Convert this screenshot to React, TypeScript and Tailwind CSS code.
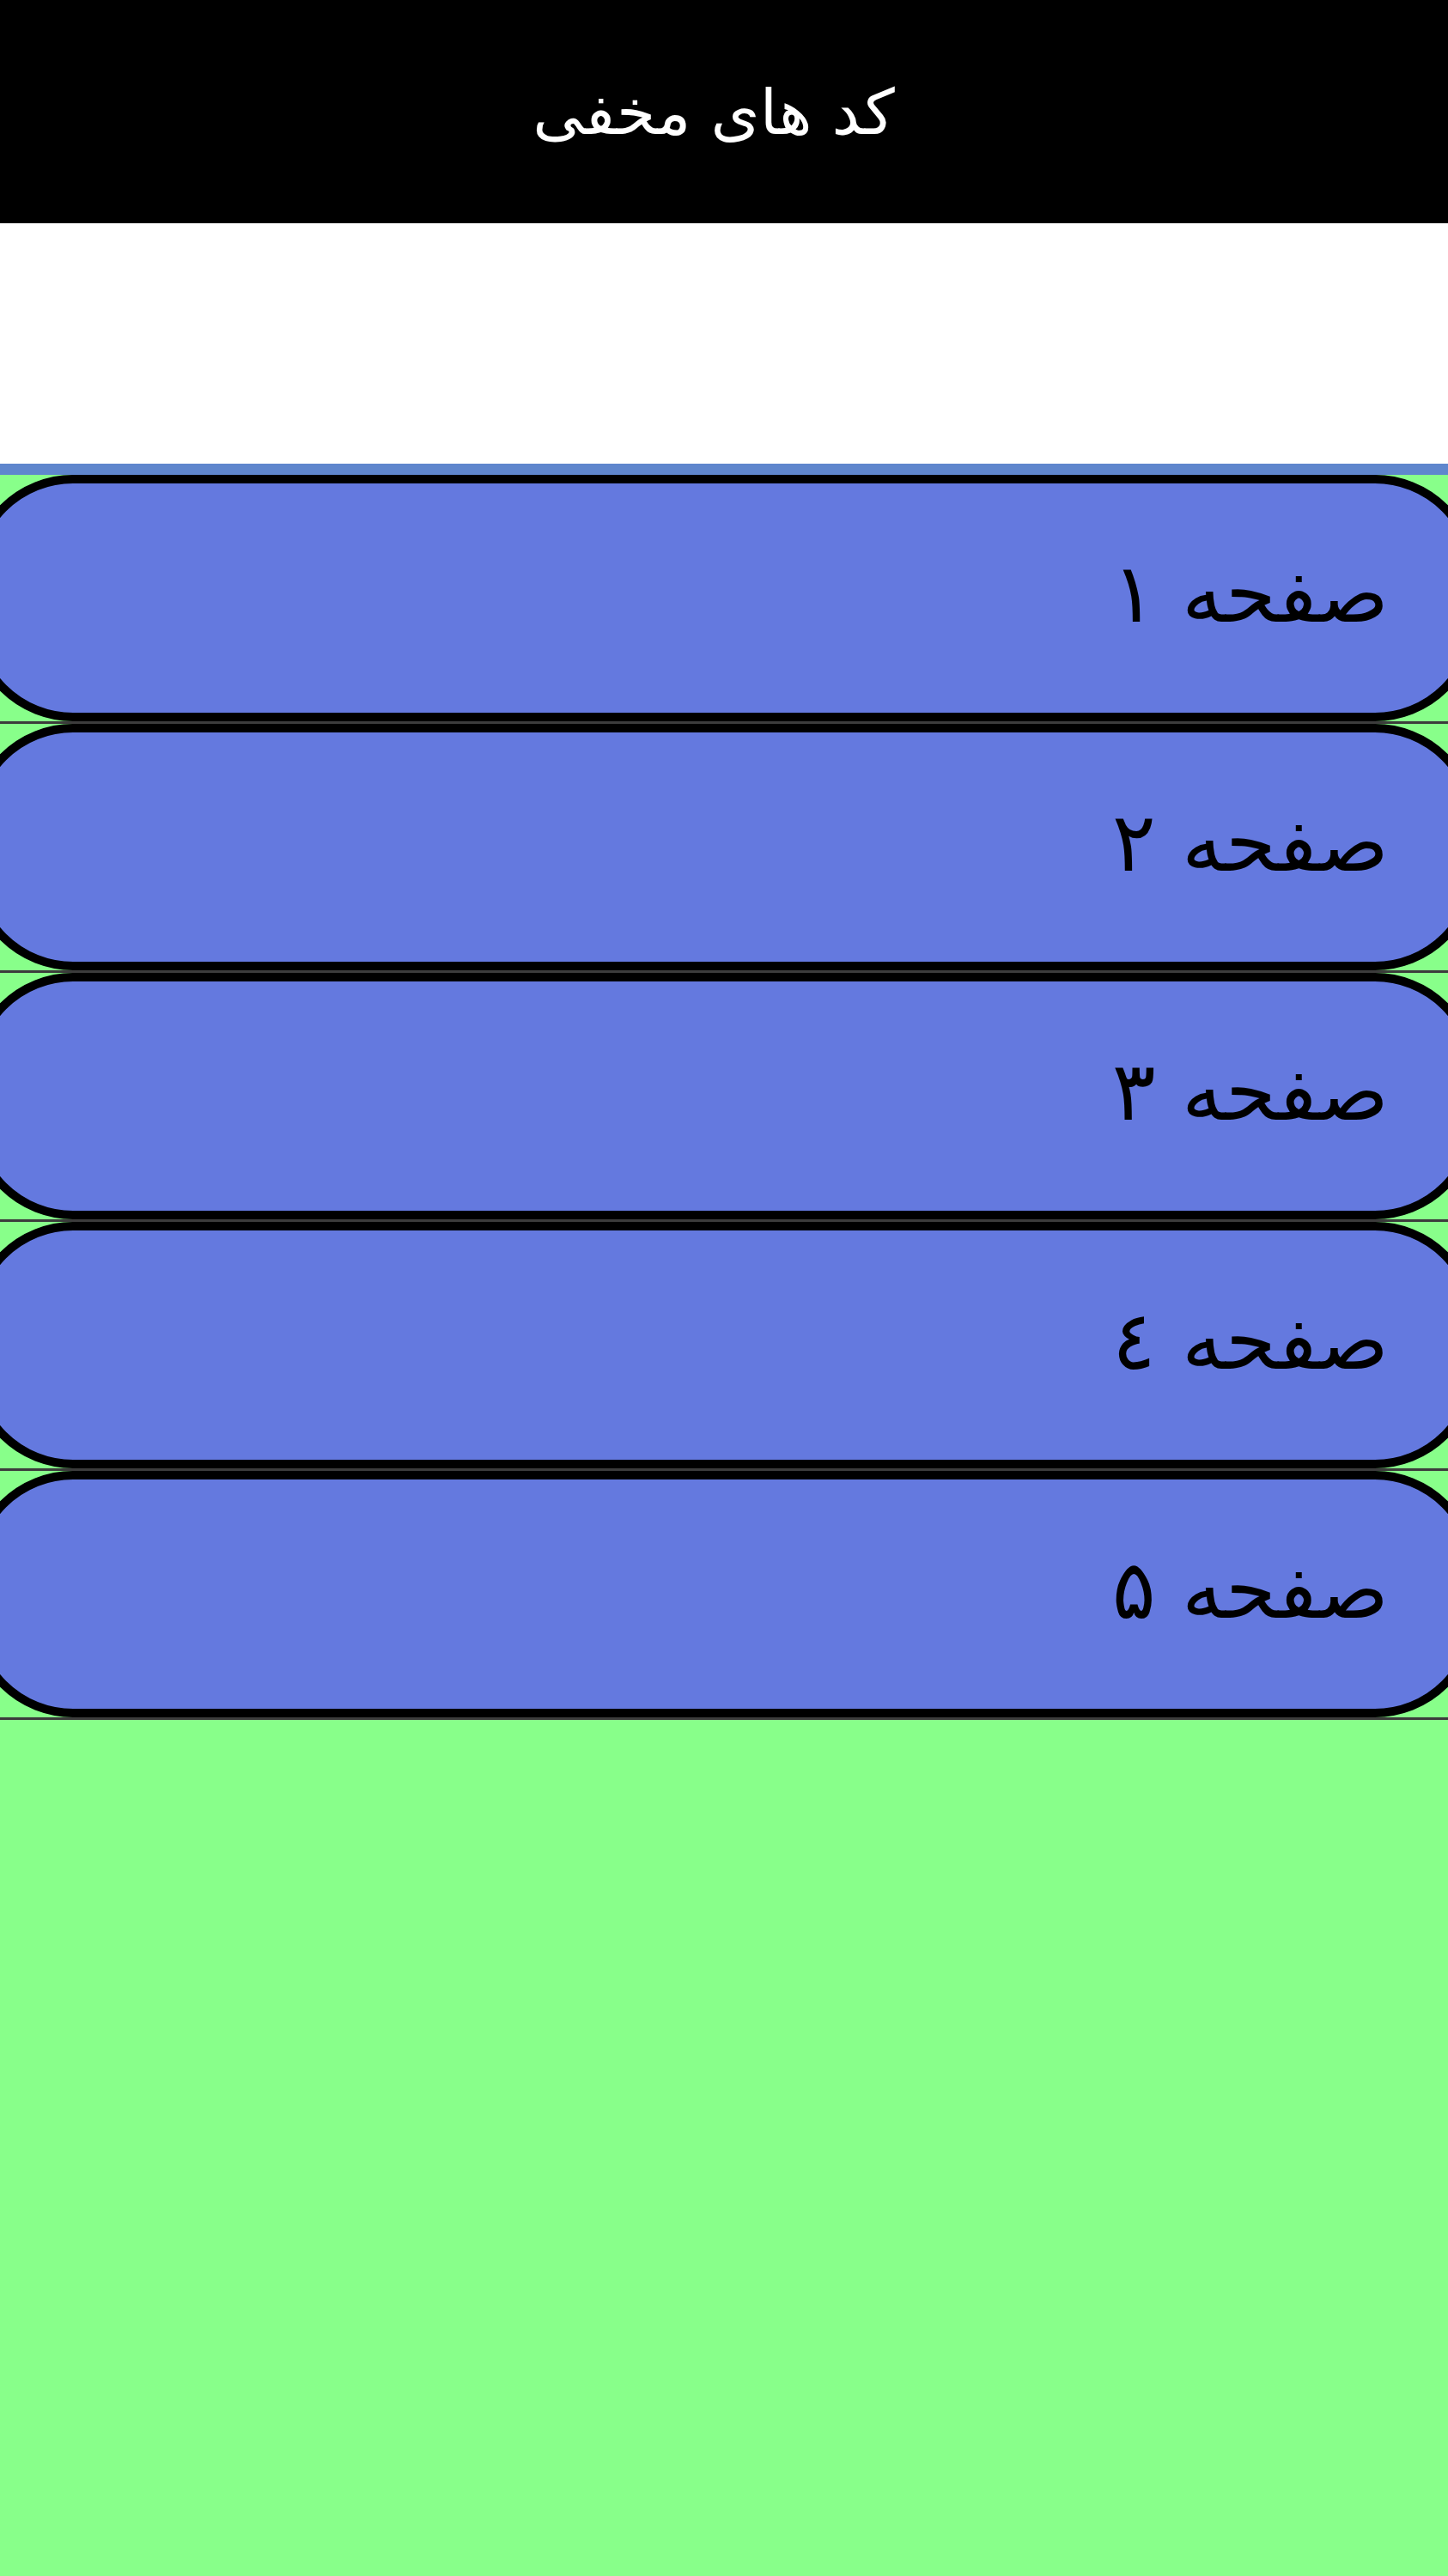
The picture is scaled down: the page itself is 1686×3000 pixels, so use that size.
import React from "react";

const items = ["صفحه ۱", "صفحه ۲", "صفحه ۳", "صفحه ٤", "صفحه ۵"];

export default function App() {
  return (
    <div className="w-[1686px] h-[3000px] overflow-hidden flex flex-col bg-[#88ff8a]" style={{ fontFamily: '"DejaVu Sans", sans-serif' }}>
      <div className="h-[260px] shrink-0 bg-black flex items-center justify-center pr-[24px]">
        <span dir="rtl" className="text-white text-[73px] leading-none">کد های مخفی</span>
      </div>
      <div className="h-[280px] shrink-0 bg-white" />
      <div className="h-[13px] shrink-0 bg-[#5f86cd]" />
      <div className="flex flex-col">
        {items.map((t) => (
          <div key={t} className="flex flex-col">
            <div
              dir="rtl"
              className="h-[287px] mx-[-35px] rounded-[120px] border-[10px] border-black bg-[#6479df] flex items-center pr-[94px] pb-[10px]"
            >
              <span className="text-black text-[95px] leading-none">{t}</span>
            </div>
            <div className="h-[3px] bg-[#3c3c3c]" />
          </div>
        ))}
      </div>
    </div>
  );
}
